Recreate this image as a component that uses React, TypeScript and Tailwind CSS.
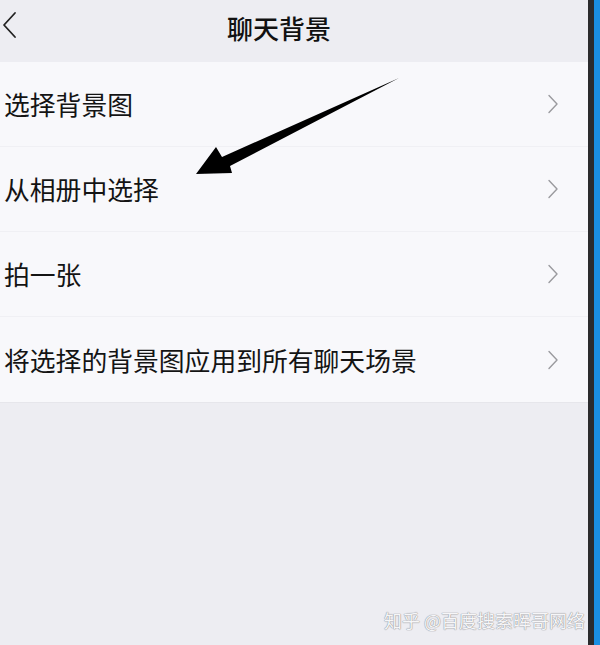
import React from 'react';

const items = ['选择背景图', '从相册中选择', '拍一张', '将选择的背景图应用到所有聊天场景'];

const ChevronRight = () => (
  <svg width="12" height="20" viewBox="0 0 12 20" fill="none">
    <path d="M2 1.5 L10 10 L2 18.5" stroke="#9a9a9e" strokeWidth="1.4" strokeLinecap="round" strokeLinejoin="round" />
  </svg>
);

const App: React.FC = () => {
  return (
    <div className="flex h-[645px] w-[600px] overflow-hidden font-['Noto_Sans_CJK_SC','Noto_Sans',sans-serif]">
      <div className="relative flex w-[588px] flex-col bg-[#ededf2]">
        {/* header */}
        <div className="flex h-[62px] items-center">
          <svg width="16" height="28" viewBox="0 0 16 28" fill="none" className="ml-[1px] -mt-[12px]">
            <path d="M14 2 L3 14 L14 26" stroke="#222" strokeWidth="1.8" strokeLinecap="round" strokeLinejoin="round" />
          </svg>
          <h1 className="ml-[210px] -mt-[7px] text-[26px] font-medium text-[#111]">聊天背景</h1>
        </div>

        {/* list */}
        <div className="bg-[#f8f8fb]">
          {items.map((label, i) => (
            <div
              key={label}
              className={`flex h-[85px] items-center justify-between pl-[4px] pr-[29px] ${i < items.length - 1 ? 'border-b border-[#f0f0f4]' : ''}`}
            >
              <span className="text-[25.8px] leading-none text-[#141414]">{label}</span>
              <ChevronRight />
            </div>
          ))}
        </div>
        <div className="h-px bg-[#e6e6eb]" />

        {/* arrow annotation */}
        <svg className="absolute left-0 top-0" width="588" height="645" viewBox="0 0 588 645">
          <polygon points="196,174 216,147 222,157 399,78 230,166 232,173" fill="#000" />
        </svg>

        <div className="mt-auto mb-[16px] mr-[3px] text-right text-[18px] leading-none text-[#f6f6f8] [text-shadow:0_0_1px_#8a8a8f,0_0_1px_#8a8a8f]">
          知乎 @百度搜索晖哥网络
        </div>
      </div>
      <div className="w-[6px] bg-[#2b2b2d]" />
      <div className="w-[6px] bg-[#1a8ee2]" />
    </div>
  );
};

export default App;
